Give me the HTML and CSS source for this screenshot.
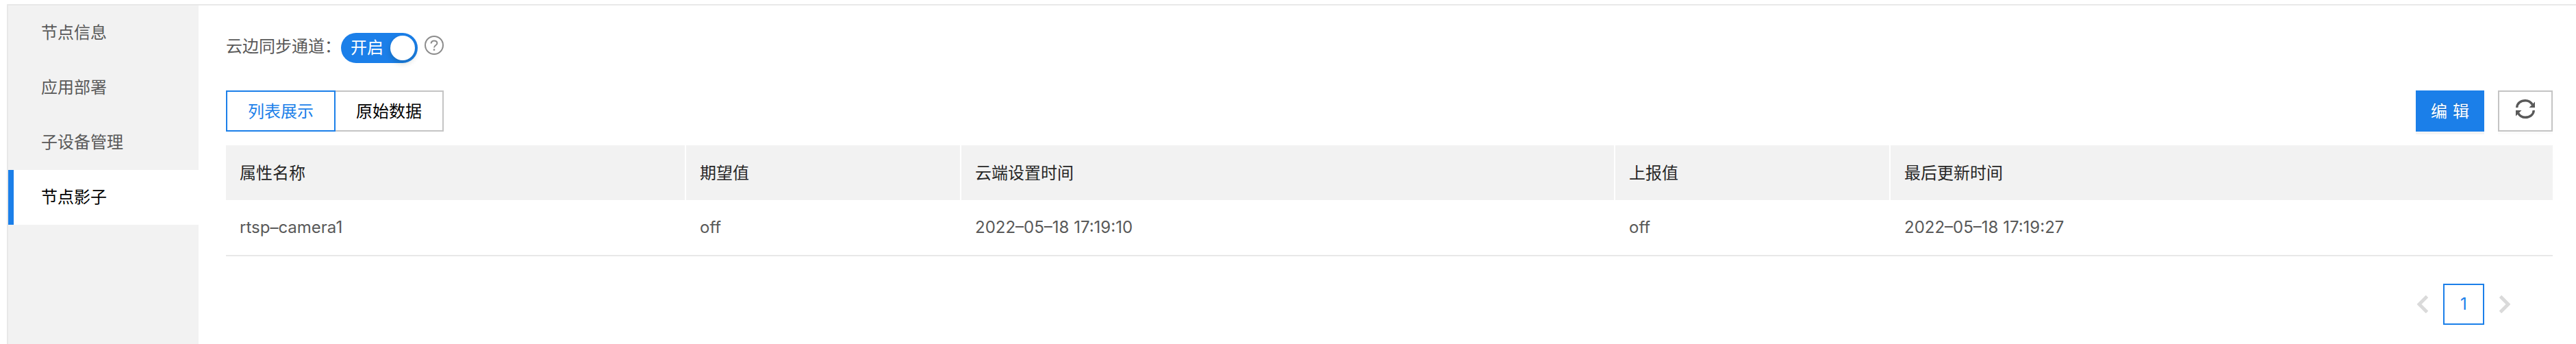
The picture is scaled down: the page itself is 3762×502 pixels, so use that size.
FILE: index.html
```
<!DOCTYPE html>
<html lang="zh-CN">
<head>
    <meta charset="UTF-8">
    <title>节点影子</title>
    <link rel="stylesheet" href="styles.css">
</head>
<body>

<div class="page">
    <nav class="sidebar">
        <a class="menu-item">节点信息</a>
        <a class="menu-item">应用部署</a>
        <a class="menu-item">子设备管理</a>
        <a class="menu-item active">节点影子</a>
    </nav>

    <main class="content">
        <div class="sync">
            <span class="sync-label">云边同步通道：</span>
            <span class="switch"><span class="switch-text">开启</span><span class="knob"></span></span>
            <svg class="help" viewBox="0 0 28 28" width="28" height="28" fill="none" stroke="#8c8c8c" stroke-width="2">
                <circle cx="14" cy="14" r="13"/>
                <path d="M9.6 11.6C9.600 9 11.400 7.600 14 7.600s4.400 1.400 4.400 3.600c0 2.700-4.400 3-4.400 6.300"/>
                <path d="M14 19.4v2.4" stroke-width="2.4"/>
            </svg>
        </div>

        <div class="toolbar">
            <div class="tabs">
                <button class="tab selected">列表展示</button>
                <button class="tab">原始数据</button>
            </div>
            <div class="actions">
                <button class="edit">编<span class="gap"></span>辑</button>
                <button class="refresh">
                    <svg viewBox="0 0 28 28" width="28" height="28">
                        <path d="M1.700 12C2 5.500 7.500 1.700 14 1.700c4.600 0 8.200 2.300 10.300 6" fill="none" stroke="#595959" stroke-width="3.4"/>
                        <path d="M26.300 16C26 22.500 20.500 26.300 14 26.300c-4.600 0-8.200-2.300-10.300-6" fill="none" stroke="#595959" stroke-width="3.4"/>
                        <path d="M28 3.500V12h-8.500zM0 24.500V16h8.500z" fill="#595959"/>
                    </svg>
                </button>
            </div>
        </div>

        <table class="shadow-table">
            <colgroup>
                <col class="col-name">
                <col class="col-value">
                <col class="col-time">
                <col class="col-value">
                <col>
            </colgroup>
            <thead>
                <tr>
                    <th>属性名称</th>
                    <th>期望值</th>
                    <th>云端设置时间</th>
                    <th>上报值</th>
                    <th>最后更新时间</th>
                </tr>
            </thead>
            <tbody>
                <tr>
                    <td>rtsp–camera1</td>
                    <td>off</td>
                    <td>2022–05–18 17:19:10</td>
                    <td>off</td>
                    <td>2022–05–18 17:19:27</td>
                </tr>
            </tbody>
        </table>

        <div class="pagination">
            <svg class="arrow" viewBox="0 0 16 26" width="16" height="26"><path d="M14.500 1.500L3 13l11.500 11.500"/></svg>
            <span class="page-num">1</span>
            <svg class="arrow" viewBox="0 0 16 26" width="16" height="26"><path d="M1.500 1.500L13 13 1.500 24.500"/></svg>
        </div>
    </main>
</div>

</body>
</html>
```
FILE: styles.css
```
* {
    box-sizing: border-box;
}
body {
    margin: 0;
    padding: 6px 0 0 10px;
    background: #fff;
    color: #595959;
    font-family: Inter, "Noto Sans CJK SC", sans-serif;
    font-size: 24px;
    font-weight: 400;
    overflow: hidden;
}
.page {
    display: flex;
    height: 496px;
    border-top: 2px solid #e8e8e8;
    border-left: 2px solid #e8e8e8;
}
.sidebar {
    width: 278px;
    background: #f2f2f2;
}
.menu-item {
    display: block;
    height: 80px;
    padding-left: 48px;
    line-height: 80px;
}
.menu-item.active {
    padding-left: 40px;
    border-left: 8px solid #1b7fe9;
    background: #fff;
    color: #000;
}
.content {
    flex: 1;
    padding: 40px 34px 0 40px;
}
.sync {
    display: flex;
    height: 84px;
    align-items: flex-start;
}
.sync-label {
    width: 168px;
    line-height: 39px;
}
.switch {
    display: flex;
    justify-content: space-between;
    align-items: center;
    width: 112px;
    height: 44px;
    padding: 0 4px 0 14px;
    border-radius: 22px;
    background: #1b7fe9;
    color: #fff;
}
.switch-text {
    line-height: 44px;
}
.knob {
    width: 36px;
    height: 36px;
    border-radius: 50%;
    background: #fff;
    box-shadow: 0 4px 8px rgba(0, 35, 11, 0.2);
}
.help {
    margin: 4px 0 0 10px;
}
.toolbar {
    display: flex;
    justify-content: space-between;
    height: 80px;
}
button {
    height: 60px;
    padding: 0 0 4px;
    border: 2px solid #c4c4c4;
    background: #fff;
    color: #000;
    font: inherit;
}
.tabs,
.actions {
    display: flex;
}
.tab {
    width: 158px;
    border-left: none;
}
.tab.selected {
    width: 160px;
    border: 2px solid #1b7fe9;
    color: #1b7fe9;
}
.actions {
    gap: 20px;
}
.edit {
    width: 100px;
    border-color: #1b7fe9;
    background: #1b7fe9;
    color: #fff;
    box-shadow: 0 4px 0 rgba(0, 0, 0, 0.043);
    text-shadow: 0 -2px 0 rgba(0, 0, 0, 0.12);
}
.gap {
    display: inline-block;
    width: 8px;
}
.refresh {
    display: flex;
    justify-content: center;
    align-items: flex-start;
    width: 80px;
    padding: 11px 0 0;
    box-shadow: 0 4px 0 rgba(0, 0, 0, 0.016);
}
.shadow-table {
    width: 100%;
    table-layout: fixed;
    border-collapse: separate;
    border-spacing: 0;
}
.col-name {
    width: 672px;
}
.col-value {
    width: 402px;
}
.col-time {
    width: 955px;
}
th,
td {
    padding: 0 20px;
    text-align: left;
    font-weight: 400;
}
th {
    height: 80px;
    padding-bottom: 4px;
    border-right: 2px solid #fff;
    background: #f2f2f2;
    color: #262626;
}
th:last-child {
    border-right: none;
}
td {
    height: 82px;
    padding-bottom: 1px;
    border-bottom: 2px solid #e8e8e8;
}
.pagination {
    display: flex;
    align-items: center;
    justify-content: flex-end;
    gap: 22px;
    margin-top: 40px;
    padding-right: 62px;
}
.page-num {
    width: 60px;
    height: 60px;
    border: 2px solid #1b7fe9;
    color: #1b7fe9;
    line-height: 56px;
    text-align: center;
}
.arrow {
    fill: none;
    stroke: #dadada;
    stroke-width: 5;
}
```
